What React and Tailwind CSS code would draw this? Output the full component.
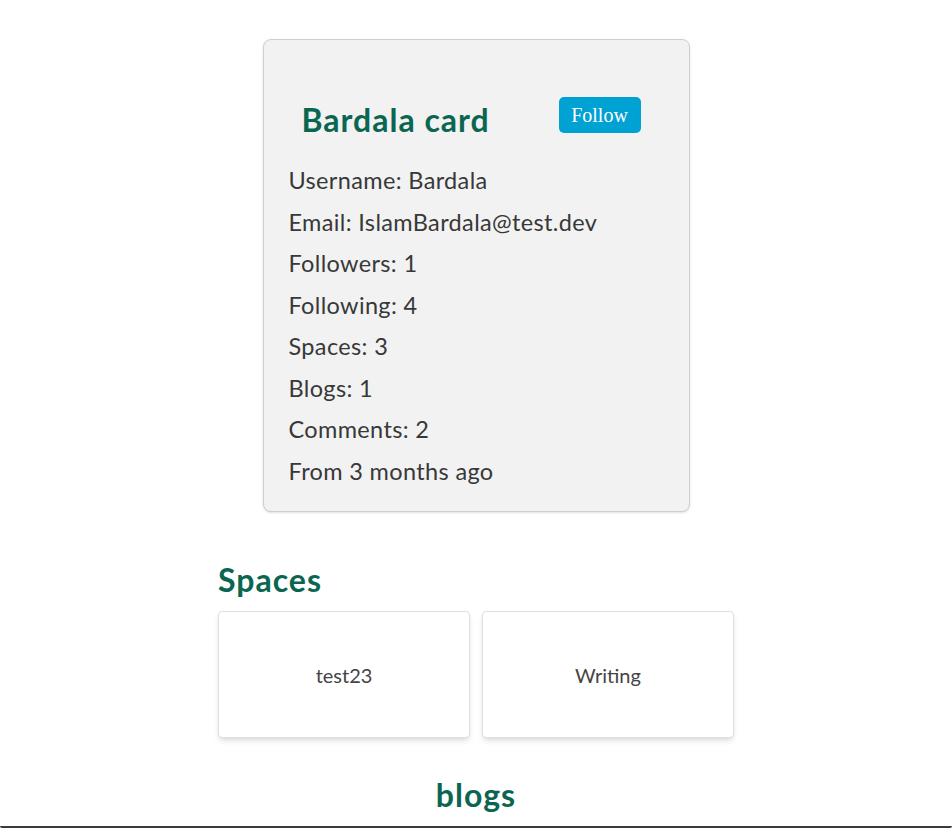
import React from 'react';

const stats = [
  'Username: Bardala',
  'Email: IslamBardala@test.dev',
  'Followers: 1',
  'Following: 4',
  'Spaces: 3',
  'Blogs: 1',
  'Comments: 2',
  'From 3 months ago',
];

const spaces = ['test23', 'Writing'];

export default function App() {
  return (
    <div className="h-[828px] flex flex-col bg-white font-['Lato',sans-serif]">
      <div className="flex-1 overflow-hidden flex flex-col items-center">
        <div className="mt-[39px] w-[427px] bg-[#f2f2f2] border border-[#cfcfcf] rounded-lg shadow-sm px-[25px] pt-[57px] pb-[19px]">
          <div className="flex items-end justify-between pl-[13px] pr-[23px] mb-[22px]">
            <h2 className="text-[32px] leading-[36px] tracking-[1px] font-bold text-[#0b6651]">Bardala card</h2>
            <button className="mb-[5px] h-[36px] w-[82px] rounded-[5px] bg-[#00a1d3] text-white text-[20px] font-['Liberation_Serif',serif]">
              Follow
            </button>
          </div>
          {stats.map(s => (
            <p key={s} className="text-[23.5px] leading-[41.5px] tracking-[0.35px] text-[#383838]">{s}</p>
          ))}
        </div>

        <div className="w-[516px] mt-[48px]">
          <h2 className="text-[32px] leading-[40px] tracking-[1px] font-bold text-[#0b6651]">Spaces</h2>
          <div className="grid grid-cols-2 gap-[12px] mt-[11px]">
            {spaces.map(s => (
              <div key={s} className="h-[127px] bg-white border border-[#dedede] rounded-[4px] shadow-md flex items-center justify-center text-[20px] text-[#444444]">
                {s}
              </div>
            ))}
          </div>
          <h2 className="mt-[37px] text-center text-[32px] leading-[40px] tracking-[1px] font-bold text-[#0b6651]">blogs</h2>
        </div>
      </div>
      <div className="h-[2px] bg-[#3a3a3a] rounded-b-md" />
    </div>
  );
}
